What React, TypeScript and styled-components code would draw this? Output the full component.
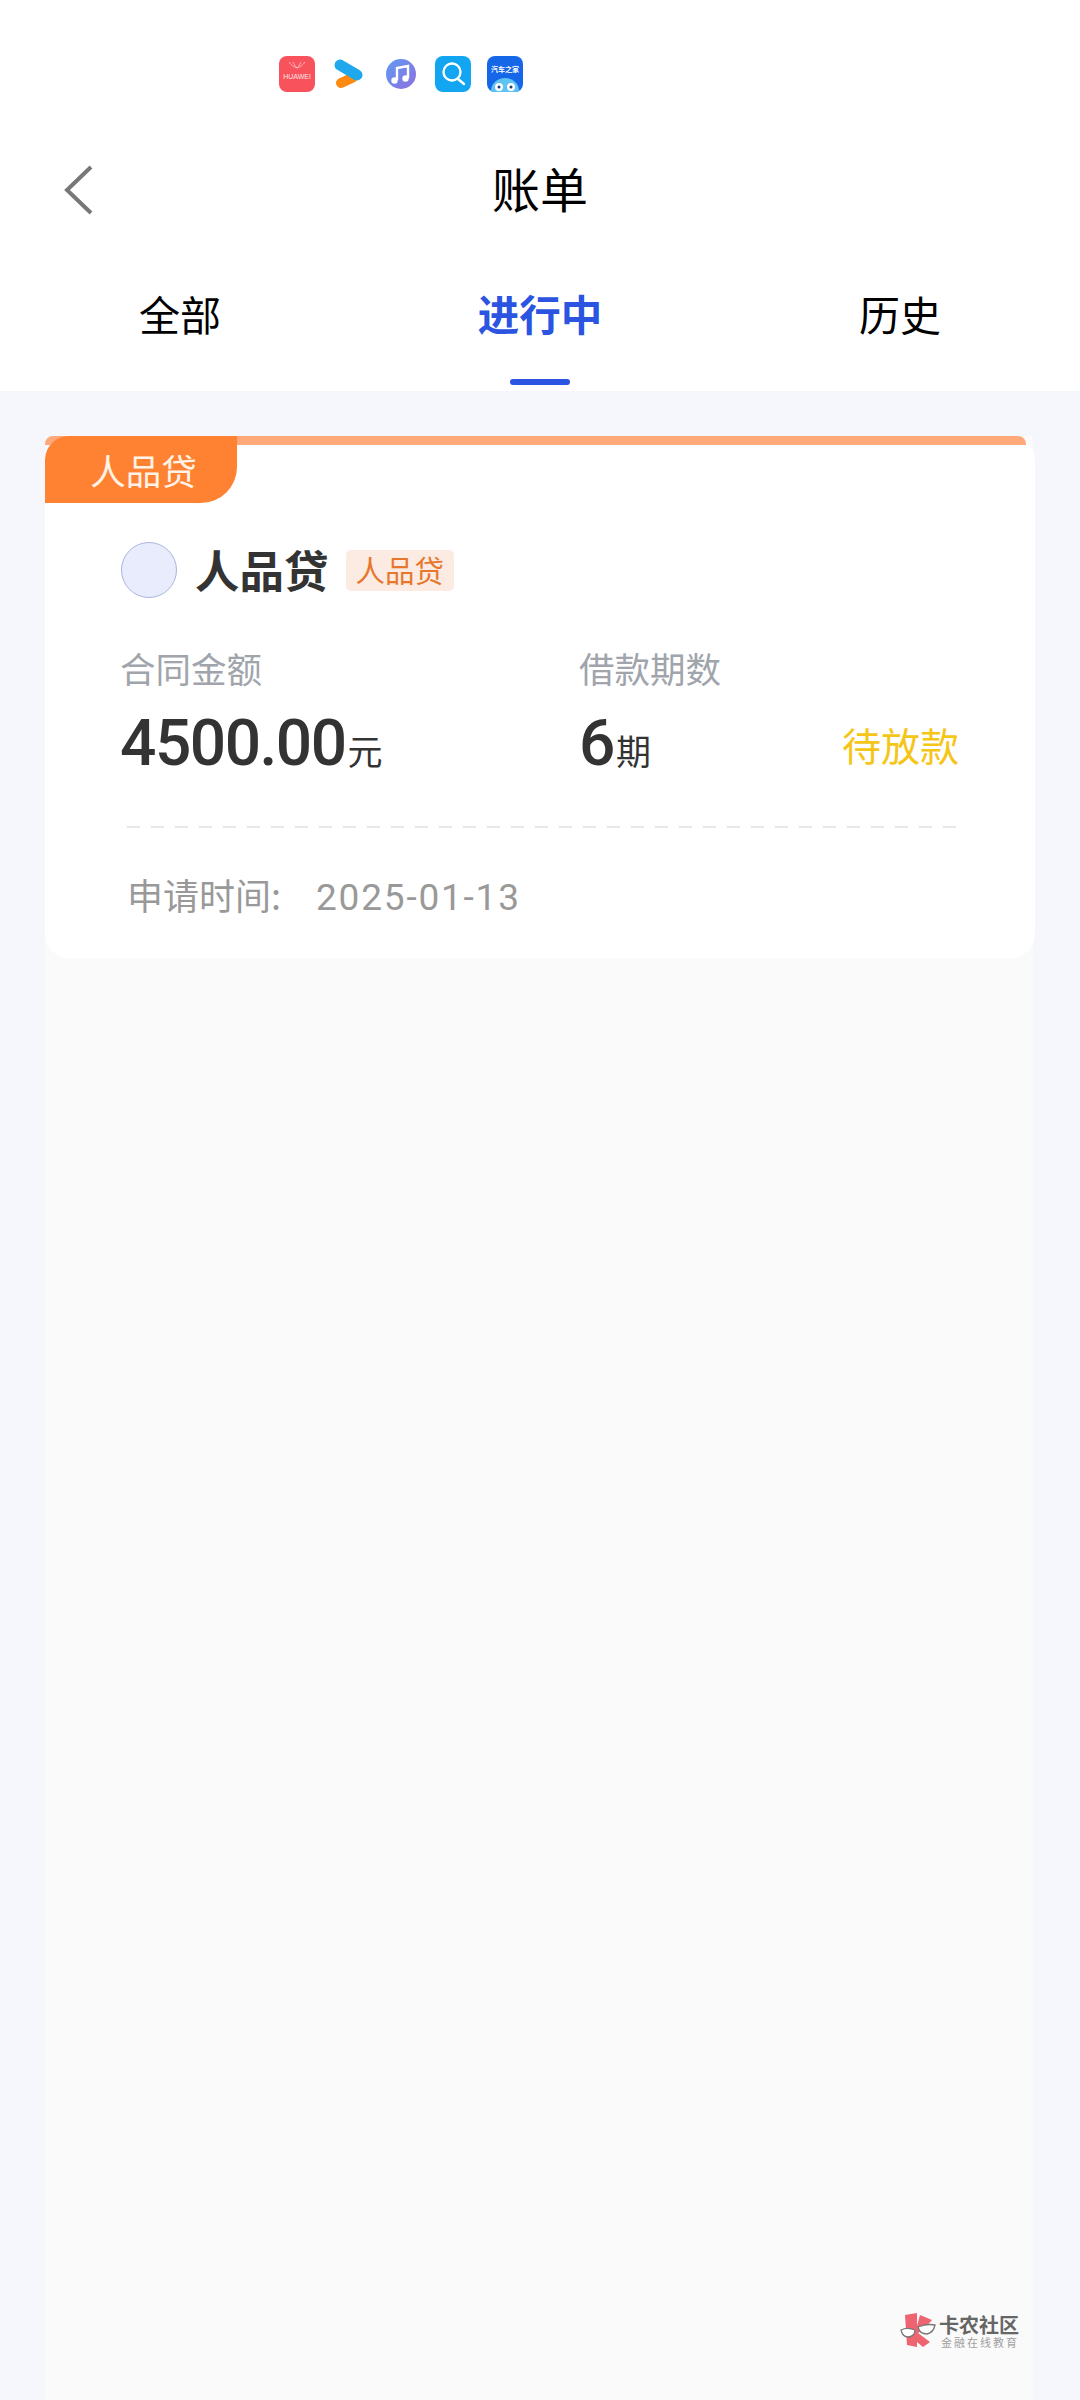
import * as React from "react";
import styled, { createGlobalStyle } from "styled-components";

const CJK = `"Noto Sans CJK SC", "Noto Sans", sans-serif`;

const GlobalStyle = createGlobalStyle`
  html, body {
    margin: 0;
    padding: 0;
    background: #f5f7fc;
    font-family: ${CJK};
  }
`;

const Page = styled.div`
  position: relative;
  width: 1080px;
  height: 2400px;
  overflow: hidden;
  display: flex;
  flex-direction: column;
  background: #f5f7fc;
`;

const Header = styled.header`
  background: #fff;
  height: 391px;
  flex: none;
`;

const StatusIcons = styled.div`
  display: flex;
  align-items: center;
  gap: 16px;
  height: 36px;
  padding: 56px 0 0 279px;
`;

const AppIconBox = styled.div<{ $bg: string }>`
  position: relative;
  width: 36px;
  height: 36px;
  border-radius: 8px;
  background: ${(p) => p.$bg};
  overflow: hidden;
  display: flex;
  flex-direction: column;
  align-items: center;
  color: #fff;
  flex: none;
`;

const HuaweiLabel = styled.span`
  font-family: "Liberation Sans", sans-serif;
  font-size: 7px;
  line-height: 8px;
  margin-top: 3px;
  color: #ffe3e3;
`;

const HomeLabel = styled.span`
  font-size: 7px;
  font-weight: 700;
  line-height: 8px;
  margin-top: 9px;
  white-space: nowrap;
`;

const NavBar = styled.nav`
  position: relative;
  height: 84px;
  margin-top: 56px;
  display: flex;
  align-items: center;
  justify-content: center;
`;

const BackButton = styled.div`
  position: absolute;
  left: 62px;
  top: 16px;
  width: 32px;
  height: 52px;
`;

const Title = styled.h1`
  margin: 0 0 6px;
  font-size: 48px;
  font-weight: 400;
  line-height: 78px;
  color: #000;
`;

const Tabs = styled.div`
  display: grid;
  grid-template-columns: repeat(3, 360px);
  margin-top: 32px;
`;

const Tab = styled.div<{ $active?: boolean }>`
  position: relative;
  height: 127px;
  text-align: center;
  font-size: ${(p) => (p.$active ? 41.5 : 41)}px;
  line-height: 98px;
  font-weight: ${(p) => (p.$active ? 600 : 400)};
  color: ${(p) => (p.$active ? "#2b54e0" : "#000")};

  &::after {
    content: "";
    display: ${(p) => (p.$active ? "block" : "none")};
    position: absolute;
    left: 150px;
    bottom: 6px;
    width: 60px;
    height: 6px;
    border-radius: 3px;
    background: #2b54e0;
  }
`;

const ListPanel = styled.main`
  flex: 1;
  width: 988px;
  margin: 45px 0 0 45px;
  background: #fafafb;
`;

const Card = styled.section`
  position: relative;
  width: 990px;
  height: 522px;
  box-sizing: border-box;
  padding: 106px 76px 0;
  background: #fff;
  border-radius: 24px;
`;

const TopStripe = styled.div`
  position: absolute;
  top: 0;
  left: 0;
  right: 9px;
  height: 9px;
  border-radius: 8px 8px 0 0;
  background: #ffa97a;
`;

const Ribbon = styled.div`
  position: absolute;
  top: 0;
  left: 0;
  width: 192px;
  height: 67px;
  box-sizing: border-box;
  padding-left: 5px;
  border-radius: 24px 0 36px 0;
  background: #ff8233;
  color: #fff3e8;
  font-size: 35.5px;
  line-height: 67px;
  text-align: center;
`;

const ProductRow = styled.div`
  display: flex;
  align-items: center;
  height: 56px;
`;

const ProductLogo = styled.div`
  width: 56px;
  height: 56px;
  box-sizing: border-box;
  border-radius: 50%;
  border: 1px solid #a9b5dc;
  background: #e8ecfc;
  flex: none;
`;

const ProductName = styled.div`
  margin: 0 0 2px 18px;
  font-size: 44.5px;
  font-weight: 700;
  line-height: 54px;
  color: #333;
`;

const ProductTag = styled.div`
  margin: 0 0 0 17px;
  padding: 0 10px;
  height: 41px;
  border-radius: 5px;
  background: #fbebe2;
  color: #e8772e;
  font-size: 29.5px;
  line-height: 39px;
`;

const Stats = styled.div`
  display: flex;
  align-items: flex-end;
  margin-top: 50px;
`;

const Stat = styled.div<{ $width: number }>`
  width: ${(p) => p.$width}px;
  flex: none;
`;

const StatLabel = styled.div`
  margin-left: -1px;
  font-size: 35.5px;
  line-height: 40px;
  color: #a0a4ab;
`;

const StatValue = styled.div`
  display: flex;
  align-items: baseline;
  margin-top: 27px;
  height: 58px;
  color: #333;
`;

const Digits = styled.span`
  margin-left: -1px;
  font-family: Roboto, "Liberation Sans", sans-serif;
  font-size: 64px;
  font-weight: 500;
  line-height: 58px;
  letter-spacing: -1.5px;
`;

const Unit = styled.span`
  margin-left: 2px;
  font-size: 35px;
  line-height: 58px;
`;

const Status = styled.div`
  margin-left: auto;
  font-size: 39px;
  line-height: 58px;
  color: #f5c518;
`;

const Divider = styled.div`
  height: 2px;
  margin: 53px 2px 0 6px;
  width: 830px;
  background: repeating-linear-gradient(to right, #e8e8e8 0, #e8e8e8 13px, transparent 13px, transparent 24px);
`;

const ApplyRow = styled.div`
  display: flex;
  align-items: baseline;
  margin: 43px 0 0 6px;
  height: 46px;
  color: #999;
`;

const ApplyLabel = styled.span`
  font-size: 36px;
  line-height: 46px;
  width: 189px;
`;

const ApplyDate = styled.span`
  font-family: Roboto, "Liberation Sans", sans-serif;
  font-size: 37px;
  line-height: 46px;
  letter-spacing: 1.8px;
`;

const Watermark = styled.div`
  position: absolute;
  left: 900px;
  top: 2312px;
  display: flex;
  align-items: flex-start;
  gap: 3px;
`;

const MarkText = styled.div`
  display: flex;
  flex-direction: column;
  padding-top: 2px;
`;

const MarkName = styled.span`
  font-size: 20px;
  font-weight: 700;
  line-height: 21px;
  color: #666;
`;

const MarkSub = styled.span`
  margin: 1px 0 0 2px;
  font-size: 11px;
  line-height: 12px;
  letter-spacing: 2px;
  color: #a0a0a0;
  white-space: nowrap;
`;

const App = () => {
  return (
    <>
      <GlobalStyle />
      <Page>
        <Header>
          <StatusIcons>
            <AppIconBox $bg="#f8525c">
              <svg width="36" height="14" viewBox="0 0 36 14">
                <path d="M10 6c2 3 5 5 8 6 3-1 6-3 8-6M14 6c1 2 2 4 4 6 2-2 3-4 4-6" fill="none" stroke="#ffc9c9" strokeWidth="0.8" />
              </svg>
              <HuaweiLabel>HUAWEI</HuaweiLabel>
            </AppIconBox>
            <svg width="36" height="36" viewBox="0 0 36 36">
              <path d="M10 27 L21 22" stroke="#ff8a12" strokeWidth="10" strokeLinecap="round" />
              <path d="M9 9 L26 19" stroke="#1fa9ec" strokeWidth="11" strokeLinecap="round" />
            </svg>
            <svg width="36" height="36" viewBox="0 0 36 36">
              <defs>
                <linearGradient id="music" x1="0" y1="0" x2="1" y2="1">
                  <stop offset="0" stopColor="#5f9bf2" />
                  <stop offset="1" stopColor="#8d6fe0" />
                </linearGradient>
              </defs>
              <circle cx="18" cy="18" r="15" fill="url(#music)" />
              <path d="M14 24V12l11-2v12" fill="none" stroke="#fff" strokeWidth="2.4" />
              <circle cx="11.5" cy="24.5" r="3.2" fill="#fff" />
              <circle cx="22.5" cy="22.5" r="3.2" fill="#fff" />
            </svg>
            <AppIconBox $bg="#12a6f2">
              <svg width="36" height="36" viewBox="0 0 36 36">
                <circle cx="17" cy="16" r="8.5" fill="none" stroke="#fff" strokeWidth="2.4" />
                <path d="M23 23l6 5" stroke="#fff" strokeWidth="2.4" strokeLinecap="round" />
              </svg>
            </AppIconBox>
            <AppIconBox $bg="#1667e8">
              <HomeLabel>汽车之家</HomeLabel>
              <svg width="36" height="19" viewBox="0 0 36 19">
                <ellipse cx="18" cy="18" rx="14" ry="13" fill="#5ec4f4" />
                <circle cx="12" cy="14" r="4" fill="#fff" />
                <circle cx="24" cy="14" r="4" fill="#fff" />
                <circle cx="12" cy="14" r="1.5" fill="#173f7a" />
                <circle cx="24" cy="14" r="1.5" fill="#173f7a" />
              </svg>
            </AppIconBox>
          </StatusIcons>
          <NavBar>
            <BackButton>
              <svg width="32" height="52" viewBox="0 0 32 52">
                <path d="M29 3 L5 26 L29 49" fill="none" stroke="#777" strokeWidth="4" />
              </svg>
            </BackButton>
            <Title>账单</Title>
          </NavBar>
          <Tabs>
            <Tab>全部</Tab>
            <Tab $active>进行中</Tab>
            <Tab>历史</Tab>
          </Tabs>
        </Header>
        <ListPanel>
          <Card>
            <TopStripe />
            <Ribbon>人品贷</Ribbon>
            <ProductRow>
              <ProductLogo />
              <ProductName>人品贷</ProductName>
              <ProductTag>人品贷</ProductTag>
            </ProductRow>
            <Stats>
              <Stat $width={459}>
                <StatLabel>合同金额</StatLabel>
                <StatValue>
                  <Digits>4500.00</Digits>
                  <Unit>元</Unit>
                </StatValue>
              </Stat>
              <Stat $width={200}>
                <StatLabel>借款期数</StatLabel>
                <StatValue>
                  <Digits>6</Digits>
                  <Unit>期</Unit>
                </StatValue>
              </Stat>
              <Status>待放款</Status>
            </Stats>
            <Divider />
            <ApplyRow>
              <ApplyLabel>申请时间:</ApplyLabel>
              <ApplyDate>2025-01-13</ApplyDate>
            </ApplyRow>
          </Card>
        </ListPanel>
        <Watermark>
          <svg width="36" height="36" viewBox="0 0 36 36">
            <path d="M5 3L17 1V14L20 3L32 8L23 18L18 21L30 30L23 35L17 30V35L7 33Z" fill="#ee6470" />
            <path d="M1 18c4-2 9-2 14 0 0 4-3 7-7 7-4 0-6-3-7-7zM35 13c-5-1-12 0-17 2 1 4 4 7 9 7 4-1 7-4 8-9z" fill="#fff" stroke="#777" strokeWidth="1.3" />
          </svg>
          <MarkText>
            <MarkName>卡农社区</MarkName>
            <MarkSub>金融在线教育</MarkSub>
          </MarkText>
        </Watermark>
      </Page>
    </>
  );
};

export default App;
